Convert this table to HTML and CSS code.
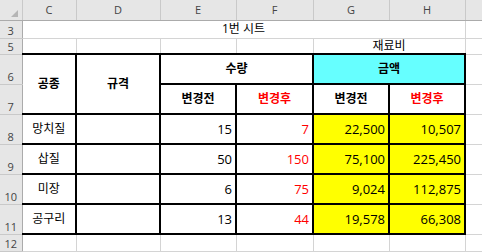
FILE: index.html
```html
<!DOCTYPE html>
<html lang="ko">
<head>
<meta charset="utf-8">
<title>1번 시트</title>
<link rel="stylesheet" href="styles.css">
</head>
<body>
<table class="sheet">
  <colgroup>
    <col class="c-rh"><col class="c-c"><col class="c-d"><col class="c-e"><col class="c-f"><col class="c-g"><col class="c-h"><col class="c-i">
  </colgroup>
  <thead>
    <tr class="r-hdr">
      <th class="corner"><svg class="tri" width="7" height="7" viewBox="0 0 7 7"><polygon points="7,0 7,7 0,7" fill="#b5b5b5"/></svg></th>
      <th>C</th><th>D</th><th>E</th><th>F</th><th>G</th><th>H</th><th></th>
    </tr>
  </thead>
  <tbody>
    <tr class="r3">
      <th>3</th>
      <td colspan="6" class="ctr">1번 시트</td>
      <td></td>
    </tr>
    <tr class="r5">
      <th>5</th>
      <td></td><td></td><td></td><td></td>
      <td colspan="2" class="ctr">재료비</td>
      <td></td>
    </tr>
    <tr class="rb">
      <th>6</th>
      <td rowspan="2" class="bx ctr b nl">공종</td>
      <td rowspan="2" class="bx ctr b">규격</td>
      <td colspan="2" class="bx ctr b">수량</td>
      <td colspan="2" class="bx ctr b cyan">금액</td>
      <td></td>
    </tr>
    <tr class="rb">
      <th>7</th>
      <td class="bx ctr b">변경전</td>
      <td class="bx ctr b red">변경후</td>
      <td class="bx ctr b">변경전</td>
      <td class="bx ctr b red">변경후</td>
      <td></td>
    </tr>
    <tr class="rb">
      <th>8</th>
      <td class="bx ctr nl">망치질</td><td class="bx"></td>
      <td class="bx num">15</td><td class="bx num red">7</td>
      <td class="bx num yel">22,500</td><td class="bx num yel">10,507</td>
      <td></td>
    </tr>
    <tr class="rb">
      <th>9</th>
      <td class="bx ctr nl">삽질</td><td class="bx"></td>
      <td class="bx num">50</td><td class="bx num red">150</td>
      <td class="bx num yel">75,100</td><td class="bx num yel">225,450</td>
      <td></td>
    </tr>
    <tr class="rb">
      <th>10</th>
      <td class="bx ctr nl">미장</td><td class="bx"></td>
      <td class="bx num">6</td><td class="bx num red">75</td>
      <td class="bx num yel">9,024</td><td class="bx num yel">112,875</td>
      <td></td>
    </tr>
    <tr class="rb">
      <th>11</th>
      <td class="bx ctr nl">공구리</td><td class="bx"></td>
      <td class="bx num">13</td><td class="bx num red">44</td>
      <td class="bx num yel">19,578</td><td class="bx num yel">66,308</td>
      <td></td>
    </tr>
    <tr class="r12">
      <th>12</th>
      <td></td><td></td><td></td><td></td><td></td><td></td><td></td>
    </tr>
  </tbody>
</table>
</body>
</html>
```
FILE: styles.css
```css
html, body {
  margin: 0;
  padding: 0;
  background: #ffffff;
}
body {
  width: 482px;
  height: 252px;
  overflow: hidden;
  font-family: "Open Sans", "Noto Sans CJK KR", sans-serif;
  color: #000;
}
.sheet {
  border-collapse: collapse;
  table-layout: fixed;
  width: 505px;
}
.c-rh { width: 22px; }
.c-c { width: 54px; }
.c-d { width: 84px; }
.c-e { width: 76px; }
.c-f { width: 77px; }
.c-g { width: 76px; }
.c-h { width: 76px; }
.c-i { width: 40px; }

.sheet td {
  border-right: 1px solid #d4d4d4;
  border-bottom: 1px solid #d4d4d4;
  padding: 0 3px;
  font-size: 12px;
  line-height: 14px;
  white-space: nowrap;
  overflow: hidden;
  vertical-align: middle;
}
.sheet thead th {
  background: #e6e6e6;
  border-right: 1px solid #c9c9c9;
  border-bottom: 1px solid #ababab;
  font-weight: normal;
  font-size: 11px;
  color: #444;
  padding: 0;
  line-height: 14px;
}
.sheet thead th.corner {
  text-align: right;
  vertical-align: bottom;
  padding: 0 4px 3px 0;
  line-height: 0;
}
.tri { display: inline-block; }
.sheet tbody th {
  background: #e6e6e6;
  border-right: 1px solid #ababab;
  border-bottom: 1px solid #c9c9c9;
  font-weight: normal;
  font-size: 11px;
  color: #444;
  padding: 0 0 1px 0;
  line-height: 13px;
  vertical-align: bottom;
  text-align: center;
}
.r-hdr { height: 20px; }
.r3 { height: 18px; }
.r5 { height: 16px; }
.rb { height: 30px; }
.r12 { height: 17px; }

.sheet td.bx { border: 2px solid #000; }
.sheet td.bx.nl { border-left: 1px solid #ababab; }
.ctr { text-align: center; }
.num { text-align: right; font-size: 13px; }
.sheet td.num { font-size: 13px; padding-right: 3px; }
.b { font-weight: bold; }
.red { color: #ff0000; }
.cyan { background: #66ffff; }
.yel { background: #ffff00; }
```
